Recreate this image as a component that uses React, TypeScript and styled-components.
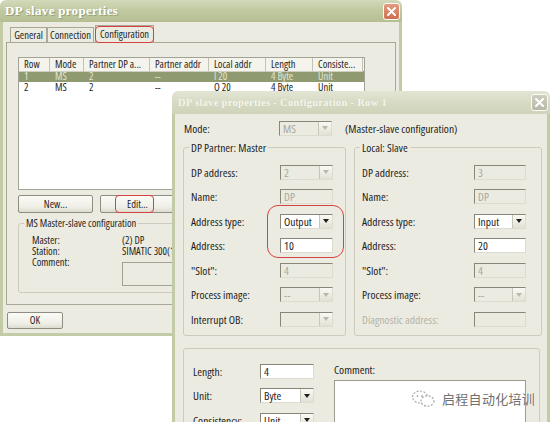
import React from "react";
import styled, { createGlobalStyle } from "styled-components";

const Global = createGlobalStyle`
  html, body { margin: 0; padding: 0; background: #fff; }
  body {
    font-family: "Open Sans", "Liberation Sans", Arial, sans-serif;
    font-stretch: condensed;
    font-size: 11px;
    color: #1e1e1e;
  }
  * { box-sizing: border-box; }
`;

const Desktop = styled.div`
  position: relative;
  width: 550px;
  height: 422px;
  overflow: hidden;
  background: #fff;
`;

const Window = styled.div<{ $x: number; $y: number; $w: number; $h: number; $fs: number }>`
  position: absolute;
  left: ${(p) => p.$x}px;
  top: ${(p) => p.$y}px;
  width: ${(p) => p.$w}px;
  height: ${(p) => p.$h}px;
  font-size: ${(p) => p.$fs}px;
  display: flex;
  flex-direction: column;
`;

const TitleBar = styled.div<{ $h: number; $inactive?: boolean }>`
  height: ${(p) => p.$h}px;
  flex: none;
  display: flex;
  align-items: center;
  justify-content: space-between;
  padding: 0 2px 0 ${(p) => (p.$inactive ? 6 : 5)}px;
  border-radius: 6px 6px 0 0;
  background: ${(p) =>
    p.$inactive
      ? "linear-gradient(180deg, #e2e5d3 0%, #d5d9c1 60%, #cfd3b9 100%)"
      : "linear-gradient(180deg, #d3d9ba 0%, #c0c89f 50%, #b6bf94 100%)"};
`;

const TitleText = styled.span<{ $inactive?: boolean }>`
  font-family: "Liberation Serif", "DejaVu Serif", serif;
  font-stretch: normal;
  font-weight: bold;
  font-size: ${(p) => (p.$inactive ? 10.5 : 13)}px;
  letter-spacing: 0.3px;
  color: ${(p) => (p.$inactive ? "#f6f6ee" : "#ffffff")};
  text-shadow: ${(p) => (p.$inactive ? "0 0 1px #c4c8b0" : "1px 1px 0 #98a078")};
  white-space: nowrap;
`;

const CloseButton = styled.div<{ $inactive?: boolean }>`
  width: 17px;
  height: 17px;
  border-radius: 3px;
  border: 1px solid #fbfbf4;
  background: ${(p) =>
    p.$inactive
      ? "linear-gradient(180deg, #cfcdc0, #b9b7a8)"
      : "linear-gradient(180deg, #e49a80, #cf6f52)"};
  display: flex;
  align-items: center;
  justify-content: center;
`;

const Frame = styled.div<{ $pl?: number; $pt?: number }>`
  flex: 1;
  background: #ecebe1;
  border: 3px solid #c3cba6;
  border-top: 0;
  padding: ${(p) => p.$pt ?? 0}px 0 0 ${(p) => p.$pl ?? 0}px;
  display: flex;
  flex-direction: column;
  align-items: flex-start;
`;

/* ---------- window 1 ---------- */

const TabStrip = styled.div`
  height: 20px;
  display: flex;
  align-items: flex-end;
  padding-left: 7px;
`;

const Tab = styled.div<{ $active?: boolean; $w: number }>`
  position: relative;
  width: ${(p) => p.$w}px;
  height: ${(p) => (p.$active ? 17 : 15)}px;
  line-height: ${(p) => (p.$active ? 16 : 14)}px;
  text-align: center;
  margin-left: ${(p) => (p.$active ? 1 : 0)}px;
  border: 1px solid #a9a795;
  border-bottom: 0;
  background: #ecebe1;
  white-space: nowrap;
`;

const RedMark = styled.div<{ $l: number; $t: number; $w: number; $h: number; $r?: number }>`
  position: absolute;
  left: ${(p) => p.$l}px;
  top: ${(p) => p.$t}px;
  width: ${(p) => p.$w}px;
  height: ${(p) => p.$h}px;
  border: 1.5px solid #d5423f;
  border-radius: ${(p) => p.$r ?? 4}px;
  pointer-events: none;
`;

const TabPanel = styled.div`
  margin-left: 3px;
  width: 390px;
  height: 263px;
  border: 1px solid #a9a795;
  padding: 14px 0 0 11px;
  display: flex;
  flex-direction: column;
  align-items: flex-start;
`;

const COLS = "31px 34px 66px 59px 57px 47px 50px";

const ListView = styled.div`
  width: 347px;
  height: 133px;
  background: #fff;
  border: 1px solid #a3a296;
`;

const ListRow = styled.div<{ $header?: boolean; $selected?: boolean }>`
  display: grid;
  grid-template-columns: ${COLS};
  height: ${(p) => (p.$header ? 13 : 11)}px;
  line-height: ${(p) => (p.$header ? 13 : 11)}px;
  background: ${(p) => (p.$header ? "#f4f3ec" : p.$selected ? "#8f9a71" : "#fff")};
  color: ${(p) => (p.$selected ? "#e1e5d2" : "#1e1e1e")};
`;

const Cell = styled.div<{ $header?: boolean }>`
  padding-left: 5px;
  white-space: nowrap;
  border-right: ${(p) => (p.$header ? "1px solid #c3c2b4" : "0")};
  border-bottom: ${(p) => (p.$header ? "1px solid #cfcec2" : "0")};
`;

const ButtonRow = styled.div`
  margin-top: 5px;
  display: flex;
  gap: 7px;
`;

const PushButton = styled.div<{ $w: number; $h: number }>`
  position: relative;
  width: ${(p) => p.$w}px;
  height: ${(p) => p.$h}px;
  line-height: ${(p) => p.$h - 2}px;
  text-align: center;
  border: 1px solid #8e8d80;
  border-radius: 2px;
  background: linear-gradient(180deg, #fbfbf7 0%, #efeee6 70%, #dddcd0 100%);
`;

const GroupBox = styled.div<{ $w: number; $h: number; $mt: number }>`
  position: relative;
  flex: none;
  margin-top: ${(p) => p.$mt}px;
  width: ${(p) => p.$w}px;
  height: ${(p) => p.$h}px;
  border: 1px solid #cdcbbd;
  border-radius: 3px;
`;

const Legend = styled.span`
  position: absolute;
  top: -7px;
  left: 5px;
  padding: 0 2px;
  line-height: 13px;
  background: #ecebe1;
  white-space: nowrap;
`;

const InfoGrid = styled.div`
  display: grid;
  grid-template-columns: 90px 120px;
  grid-auto-rows: 11px;
  line-height: 11px;
  padding: 11px 0 0 13px;
`;

const CommentBox = styled.div`
  margin-top: 5px;
  width: 120px;
  height: 24px;
  border: 1px solid #a3a296;
  background: #ecebe1;
`;

const OkRow = styled.div`
  margin: 7px 0 0 4px;
`;

/* ---------- window 2 ---------- */

const ModeRow = styled.div`
  display: flex;
  align-items: center;
  height: 16px;
  padding-left: 1px;
`;

const Label = styled.span<{ $w?: number; $disabled?: boolean }>`
  width: ${(p) => (p.$w ? `${p.$w}px` : "auto")};
  flex: none;
  white-space: nowrap;
  color: ${(p) => (p.$disabled ? "#b4b3a8" : "#1e1e1e")};
`;

const ComboSlot = styled.div`
  width: 53px;
  flex: none;
`;

const ModeNote = styled.span`
  margin-left: 13px;
`;

const GroupsRow = styled.div`
  margin-top: 11px;
  display: flex;
  gap: 8px;
`;

const FieldGrid = styled.div<{ $lw: number; $bw: number; $pt: number; $pl: number }>`
  display: grid;
  grid-template-columns: ${(p) => p.$lw}px ${(p) => p.$bw}px;
  grid-auto-rows: 24.5px;
  align-items: center;
  padding: ${(p) => p.$pt}px 0 0 ${(p) => p.$pl}px;
`;

const Field = styled.div<{ $on?: boolean }>`
  position: relative;
  height: 15px;
  line-height: 13px;
  padding-left: 3px;
  border-top: 1px solid #878679;
  border-left: 1px solid #878679;
  border-bottom: 1px solid #dddcd0;
  border-right: 1px solid #dddcd0;
  background: ${(p) => (p.$on ? "#ffffff" : "#ecebe1")};
  color: ${(p) => (p.$on ? "#1e1e1e" : "#a9a89d")};
  white-space: nowrap;
`;

const DropButton = styled.span<{ $on?: boolean }>`
  position: absolute;
  right: 0;
  top: 0;
  width: 13px;
  height: 13px;
  background: linear-gradient(180deg, #fafaf5, #e2e1d6);
  border-left: 1px solid #c7c6b9;
  display: flex;
  align-items: center;
  justify-content: center;
  &::after {
    content: "";
    border-left: 3.5px solid transparent;
    border-right: 3.5px solid transparent;
    border-top: 4px solid ${(p) => (p.$on ? "#1e1e1e" : "#b9b8ad")};
  }
`;

const BottomInner = styled.div`
  display: flex;
  padding: 10px 0 0 9px;
`;

const CommentCol = styled.div`
  margin-left: 20px;
  display: flex;
  flex-direction: column;
`;

const CommentLabel = styled.div`
  height: 21px;
  line-height: 21px;
`;

const TextArea = styled.div`
  position: relative;
  width: 192px;
  height: 70px;
  background: #fff;
  border: 1px solid #9c9b8f;
`;

const Watermark = styled.div`
  position: absolute;
  left: 76px;
  top: 8px;
  display: flex;
  align-items: center;
  gap: 5px;
  white-space: nowrap;
`;

const WatermarkText = styled.span`
  font-family: "Noto Sans CJK SC", "Noto Sans", sans-serif;
  font-stretch: normal;
  font-size: 13px;
  line-height: 18px;
  letter-spacing: 0.3px;
  color: #707070;
  white-space: nowrap;
  text-shadow: 0 0 2px #fff;
`;

/* ---------- helpers ---------- */

const XIcon = () => (
  <svg width="9" height="9" viewBox="0 0 9 9">
    <path d="M1 1 L8 8 M8 1 L1 8" stroke="#fff" strokeWidth="2" strokeLinecap="round" />
  </svg>
);

const Combo = ({ value, on }: { value: string; on?: boolean }) => (
  <Field $on={on}>
    {value}
    <DropButton $on={on} />
  </Field>
);

const WeChatIcon = () => (
  <svg width="26" height="20" viewBox="0 0 26 20">
    <ellipse cx="9" cy="8" rx="7.5" ry="6" fill="none" stroke="#a8a8a8" strokeWidth="1.2" strokeDasharray="2 1.5" />
    <ellipse cx="16.5" cy="12" rx="6.5" ry="5.2" fill="#fff" stroke="#a8a8a8" strokeWidth="1.2" strokeDasharray="2 1.5" />
    <circle cx="6.5" cy="7" r="0.9" fill="#a8a8a8" />
    <circle cx="11" cy="7" r="0.9" fill="#a8a8a8" />
  </svg>
);

const rows = [
  ["1", "MS", "2", "--", "I 20", "4 Byte", "Unit"],
  ["2", "MS", "2", "--", "O 20", "4 Byte", "Unit"],
];
const headers = ["Row", "Mode", "Partner DP a...", "Partner addr", "Local addr", "Length", "Consiste..."];

export default function App() {
  return (
    <>
      <Global />
      <Desktop>
        <Window $x={0} $y={0} $w={402} $h={336} $fs={10.5}>
          <TitleBar $h={22}>
            <TitleText>DP slave properties</TitleText>
            <CloseButton>
              <XIcon />
            </CloseButton>
          </TitleBar>
          <Frame>
            <TabStrip>
              <Tab $w={37}>General</Tab>
              <Tab $w={47}>Connection</Tab>
              <Tab $w={59} $active>
                Configuration
                <RedMark $l={-1} $t={0} $w={59} $h={17} $r={4} />
              </Tab>
            </TabStrip>
            <TabPanel>
              <ListView>
                <ListRow $header>
                  {headers.map((h) => (
                    <Cell key={h} $header>
                      {h}
                    </Cell>
                  ))}
                </ListRow>
                {rows.map((r, i) => (
                  <ListRow key={i} $selected={i === 0}>
                    {r.map((c, j) => (
                      <Cell key={j}>{c}</Cell>
                    ))}
                  </ListRow>
                ))}
              </ListView>
              <ButtonRow>
                <PushButton $w={75} $h={18}>New...</PushButton>
                <PushButton $w={75} $h={18}>
                  Edit...
                  <RedMark $l={14} $t={-1} $w={39} $h={18} $r={4} />
                </PushButton>
              </ButtonRow>
              <GroupBox $w={372} $h={70} $mt={10}>
                <Legend>MS Master-slave configuration</Legend>
                <InfoGrid>
                  <span>Master:</span>
                  <span>(2) DP</span>
                  <span>Station:</span>
                  <span>SIMATIC 300(1)</span>
                  <span>Comment:</span>
                  <CommentBox />
                </InfoGrid>
              </GroupBox>
            </TabPanel>
            <OkRow>
              <PushButton $w={56} $h={17}>OK</PushButton>
            </OkRow>
          </Frame>
        </Window>

        <Window $x={172} $y={91} $w={378} $h={345} $fs={11.5}>
          <TitleBar $h={23} $inactive>
            <TitleText $inactive>DP slave properties - Configuration - Row 1</TitleText>
            <CloseButton $inactive>
              <XIcon />
            </CloseButton>
          </TitleBar>
          <Frame $pl={8} $pt={6}>
            <ModeRow>
              <Label $w={95}>Mode:</Label>
              <ComboSlot>
                <Combo value="MS" />
              </ComboSlot>
              <ModeNote>(Master-slave configuration)</ModeNote>
            </ModeRow>
            <GroupsRow>
              <GroupBox $w={163} $h={189} $mt={0}>
                <Legend>DP Partner: Master</Legend>
                <FieldGrid $lw={89} $bw={53} $pt={12} $pl={7}>
                  <Label>DP address:</Label>
                  <Combo value="2" />
                  <Label>Name:</Label>
                  <Field>DP</Field>
                  <Label>Address type:</Label>
                  <Combo value="Output" on />
                  <Label>Address:</Label>
                  <Field $on>10</Field>
                  <Label>"Slot":</Label>
                  <Field>4</Field>
                  <Label>Process image:</Label>
                  <Combo value="--" />
                  <Label>Interrupt OB:</Label>
                  <Combo value="" />
                </FieldGrid>
                <RedMark $l={83} $t={57} $w={77} $h={53} $r={11} />
              </GroupBox>
              <GroupBox $w={188} $h={189} $mt={0}>
                <Legend>Local: Slave</Legend>
                <FieldGrid $lw={112} $bw={52} $pt={12} $pl={7}>
                  <Label>DP address:</Label>
                  <Field>3</Field>
                  <Label>Name:</Label>
                  <Field>DP</Field>
                  <Label>Address type:</Label>
                  <Combo value="Input" on />
                  <Label>Address:</Label>
                  <Field $on>20</Field>
                  <Label>"Slot":</Label>
                  <Field>4</Field>
                  <Label>Process image:</Label>
                  <Combo value="--" />
                  <Label $disabled>Diagnostic address:</Label>
                  <Field />
                </FieldGrid>
              </GroupBox>
            </GroupsRow>
            <GroupBox $w={357} $h={110} $mt={12}>
              <BottomInner>
                <FieldGrid $lw={67} $bw={54} $pt={0} $pl={0}>
                  <Label>Length:</Label>
                  <Field $on>4</Field>
                  <Label>Unit:</Label>
                  <Combo value="Byte" on />
                  <Label>Consistency:</Label>
                  <Combo value="Unit" on />
                </FieldGrid>
                <CommentCol>
                  <CommentLabel>Comment:</CommentLabel>
                  <TextArea>
                    <Watermark>
                      <WeChatIcon />
                      <WatermarkText>启程自动化培训</WatermarkText>
                    </Watermark>
                  </TextArea>
                </CommentCol>
              </BottomInner>
            </GroupBox>
          </Frame>
        </Window>
      </Desktop>
    </>
  );
}
